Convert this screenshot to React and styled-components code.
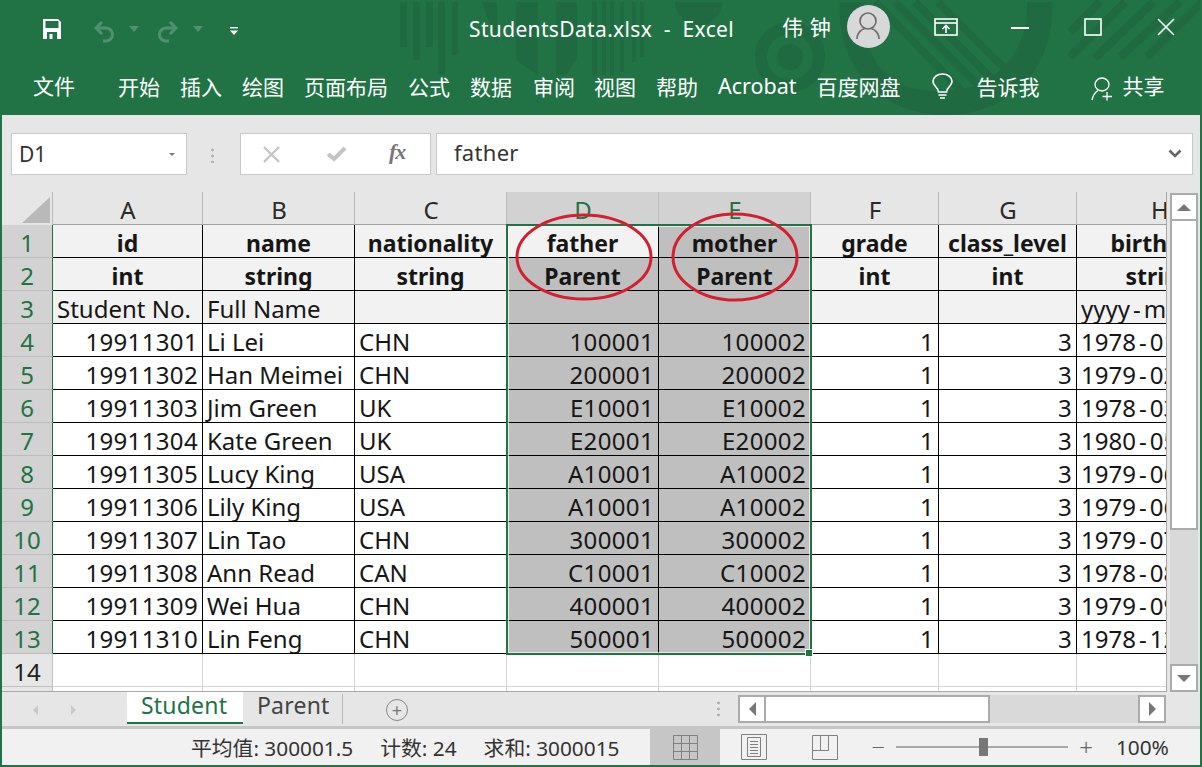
import React from 'react';
import styled, { createGlobalStyle } from 'styled-components';

const Global = createGlobalStyle`
  html, body { margin: 0; padding: 0; background: #e6e6e6; }
  body { font-family: "Noto Sans", "Noto Sans CJK SC", sans-serif; }
`;

const GREEN = '#217346';
const UI_FONT = '"Noto Sans", "Noto Sans CJK SC", sans-serif';

const Window = styled.div`
  width: 1202px; height: 767px; box-sizing: border-box; overflow: hidden;
  display: flex; flex-direction: column;
  border-left: 2px solid ${GREEN}; border-right: 2px solid ${GREEN}; border-bottom: 2px solid ${GREEN};
  background: #e6e6e6; font-family: ${UI_FONT};
`;

const Header = styled.header`
  position: relative; height: 115px; flex: none; background: ${GREEN}; color: #fff; overflow: hidden;
`;
const Decor = styled.svg`position: absolute; left: -2px; top: 0; pointer-events: none;`;

const TitleBar = styled.div`
  position: relative; height: 58px; display: flex; align-items: center; padding-left: 40px;
`;
const Slot = styled.span`
  display: flex; align-items: center; justify-content: center; flex: none; position: relative;
  top: ${p => p.$top || 0}px;
  width: ${p => p.$w}px; margin-left: ${p => p.$ml || 0}px;
`;
const Title = styled.span`
  flex: none; margin-left: ${p => p.$ml}px; font-size: 21px; white-space: pre; letter-spacing: .35px;
`;
const UserName = styled.span`
  flex: none; margin-left: ${p => p.$ml}px; font-size: 21px; letter-spacing: 1px; white-space: pre; position: relative; top: -3px;
  font-family: "Noto Sans CJK SC", sans-serif;
`;
const Avatar = styled.span`
  flex: none; width: 43px; height: 43px; border-radius: 50%; background: #d8d8d8; margin-left: ${p => p.$ml}px;
  display: flex; align-items: center; justify-content: center; position: relative; top: -3px;
`;

const Ribbon = styled.nav`
  position: relative; height: 57px; display: flex; align-items: flex-start; padding: 12px 0 0 31px;
`;
const Tab = styled.span`
  flex: none; font-size: ${p => (p.$latin ? 21.5 : 21)}px; line-height: 32px; margin-left: ${p => p.$ml}px; white-space: nowrap;
  font-family: ${p => (p.$latin ? UI_FONT : '"Noto Sans CJK SC", sans-serif')};
  position: relative; top: ${p => p.$top || 0}px;
  font-weight: 400;
`;
const RibbonIcon = styled.span`
  flex: none; margin-left: ${p => p.$ml}px; display: flex; position: relative; top: ${p => p.$top || 0}px;
`;

const FormulaRow = styled.div`
  flex: none; height: 77px; box-sizing: border-box; padding: 18px 7px 0 9px; display: flex; align-items: flex-start;
`;
const NameBox = styled.div`
  width: 176px; height: 42px; box-sizing: border-box; background: #fff; border: 1px solid #c9c9c9;
  display: flex; align-items: center; justify-content: space-between; padding: 0 11px 0 7px;
  font-size: 21px; color: #333;
`;
const DropTri = styled.span`
  width: 0; height: 0; border-left: 3.5px solid transparent; border-right: 3.5px solid transparent; border-top: 3.5px solid #777;
`;
const Grip = styled.div`
  width: 3px; height: 16px; margin: 14px 26px 0 24px; flex: none;
  background: radial-gradient(circle, #b5b5b5 1.4px, transparent 1.6px) 0 0 / 3px 6px;
`;
const FxBox = styled.div`
  width: 191px; height: 42px; box-sizing: border-box; background: #fff; border: 1px solid #c9c9c9;
  display: flex; align-items: center; padding-left: 21px; flex: none;
`;
const FxIcon = styled.span`
  display: flex; width: ${p => p.$w}px; margin-left: ${p => p.$ml || 0}px; justify-content: center;
`;
const FxLabel = styled.span`
  font: italic 700 22px "Liberation Serif", serif; color: #777; margin-left: 42px; letter-spacing: -1px; position: relative; top: -2px;
`;
const FormulaInput = styled.div`
  flex: 1; margin-left: 5px; height: 42px; box-sizing: border-box; background: #fff; border: 1px solid #c9c9c9;
  display: flex; align-items: center; justify-content: space-between; padding: 0 10px 4px 17px;
  font-size: 22px; color: #333; letter-spacing: .3px;
`;
const FormulaChevron = styled.span`display: flex; position: relative; top: 2px;`;

const SheetRow = styled.div`flex: none; height: 500px; display: flex; overflow: hidden;`;
const SheetPane = styled.div`
  position: relative; width: 1165px; box-sizing: border-box; overflow: hidden; flex: none; background: #fff;
  border-right: 1px solid #a8a8a8; border-bottom: 1px solid #a8a8a8;
`;
const Grid = styled.div`
  display: grid; width: max-content;
  grid-template-columns: 51px 150px 152px 152px 152px 152px 128px 138px 166px;
  grid-auto-rows: 33px;
`;
const Corner = styled.div`
  background: #e6e6e6; border-right: 1px solid #b9b9b9; box-sizing: border-box; display: flex;
  align-items: flex-end; justify-content: flex-end; padding: 0 2px 2px 0;
`;
const ColHead = styled.div`
  box-sizing: border-box; background: ${p => (p.$sel ? '#d2d2d2' : '#e6e6e6')};
  color: ${p => (p.$sel ? GREEN : '#2a2a2a')};
  border-right: 1px solid ${p => (p.$sel ? '#bcbcbc' : '#b9b9b9')}; border-bottom: 1px solid #9f9f9f;
  text-align: center; font-size: 24px; line-height: 36px; white-space: nowrap; padding-left: 1px;
`;
const RowHead = styled.div`
  box-sizing: border-box; background: ${p => (p.$sel ? '#d2d2d2' : '#e6e6e6')};
  color: ${p => (p.$sel ? GREEN : '#222')};
  border-right: 1px solid ${p => (p.$sel ? GREEN : '#c0c0c0')}; border-bottom: 1px solid ${p => (p.$sel ? '#bcbcbc' : '#c0c0c0')};
  text-align: center; font-size: 24px; line-height: 35px; overflow: hidden;
`;
const cellBg = p => (p.$active ? '#f2f2f2' : p.$sel ? '#bfbfbf' : p.$band ? '#f2f2f2' : '#fff');
const Cell = styled.div`
  box-sizing: border-box; background: ${cellBg};
  border-right: 1px solid ${p => (p.$blank ? '#d4d4d4' : '#000')};
  border-bottom: 1px solid ${p => (p.$blank ? '#d4d4d4' : '#000')};
  font-size: ${p => (p.$bold ? 23 : 24)}px; line-height: ${p => (p.$bold ? 37 : 35)}px; color: #161616; overflow: hidden; white-space: nowrap;
  font-weight: ${p => (p.$bold ? 700 : 400)};
  text-align: ${p => p.$align || 'left'};
  letter-spacing: ${p => (p.$align === 'right' ? '.35px' : '0')};
  padding: 0 ${p => (p.$align === 'right' ? 4 : 0)}px 0 ${p => (p.$align === 'left' || !p.$align ? 4 : 0)}px;
`;
const Hyphen = styled.span`margin: 0 3px;`;
const Selection = styled.div`
  position: absolute; left: 504px; top: 32px; width: 306px; height: 431px; box-sizing: border-box;
  border: 2px solid ${GREEN}; pointer-events: none; box-shadow: inset 0 0 0 1px rgba(255,255,255,.65);
`;
const FillHandle = styled.span`
  position: absolute; right: -3px; bottom: -4px; width: 8px; height: 8px; box-sizing: border-box; background: ${GREEN}; border: 1px solid #fff;
`;
const Marks = styled.svg`position: absolute; left: 0; top: 0; pointer-events: none;`;

const VScroll = styled.div`
  flex: none; width: 28px; margin: 1px 0 0 3px; display: flex; flex-direction: column;
`;
const VButton = styled.div`
  width: 28px; height: 28px; box-sizing: border-box; background: #fff; border: 2px solid #ababab; flex: none;
  display: flex; align-items: center; justify-content: center;
`;
const VThumb = styled.div`
  width: 28px; height: 309px; box-sizing: border-box; background: #fff; border: 2px solid #ababab; border-top: 0; flex: none;
`;
const VTrack = styled.div`flex: 1; width: 28px; background: #d9d9d9;`;
const Tri = styled.span`
  width: 0; height: 0;
  ${p => p.$d === 'up' && `border-left:7px solid transparent;border-right:7px solid transparent;border-bottom:7px solid #777;`}
  ${p => p.$d === 'down' && `border-left:7px solid transparent;border-right:7px solid transparent;border-top:7px solid #777;`}
  ${p => p.$d === 'left' && `border-top:7px solid transparent;border-bottom:7px solid transparent;border-right:7px solid #777;`}
  ${p => p.$d === 'right' && `border-top:7px solid transparent;border-bottom:7px solid transparent;border-left:7px solid #777;`}
`;

const TabBar = styled.div`
  flex: none; height: 37px; box-sizing: border-box; display: flex; align-items: flex-start;
  background: #e6e6e6; border-bottom: 3px solid #c6c6c6; position: relative;
`;
const NavArrow = styled.span`
  flex: none; margin-left: ${p => p.$ml}px; margin-top: 13px; width: 0; height: 0;
  border-top: 5px solid transparent; border-bottom: 5px solid transparent;
  ${p => (p.$left ? 'border-right: 5px solid #c9c9c9;' : 'border-left: 5px solid #c9c9c9;')}
`;
const SheetTab = styled.div`
  flex: none; box-sizing: border-box; height: 32px; padding: 0 14px;
  font-size: 23px; line-height: 26px; letter-spacing: .2px;
  background: ${p => (p.$on ? '#fff' : 'transparent')};
  color: ${p => (p.$on ? GREEN : '#444')};
  font-weight: 400;
  margin-left: ${p => p.$ml || 0}px;
  width: ${p => p.$w}px;
  border-bottom: ${p => (p.$on ? `2px solid ${GREEN}` : '0')};
`;
const TabSep = styled.span`flex: none; width: 1px; height: 30px; margin-top: 2px; background: #b5b5b5;`;
const AddSheet = styled.span`
  flex: none; margin: 7px 0 0 43px; width: 22px; height: 22px; box-sizing: border-box; border: 1.5px solid #888; border-radius: 50%;
  display: flex; align-items: center; justify-content: center; color: #777; font-size: 18px; line-height: 1;
`;
const Grip2 = styled(Grip)`margin: 8px 0 0 309px; height: 18px;`;
const HScroll = styled.div`
  flex: none; margin: 3px 0 0 18px; width: 428px; height: 28px; display: flex; position: relative; background: #d9d9d9;
`;
const HButton = styled.div`
  flex: none; width: 28px; height: 28px; box-sizing: border-box; background: #fff; border: 2px solid #ababab;
  display: flex; align-items: center; justify-content: center;
`;
const HThumb = styled.div`
  flex: none; width: 224px; height: 28px; box-sizing: border-box; background: #fff; border: 2px solid #ababab; border-left: 0;
`;
const HTrack = styled.div`flex: 1;`;

const StatusBar = styled.footer`
  flex: 1; display: flex; align-items: stretch; background: #f1f1f1; color: #333; font-size: 20.8px; min-height: 0;
`;
const Stat = styled.span`
  flex: none; margin-left: ${p => p.$ml}px; align-self: center; white-space: nowrap;
  font-family: "Noto Sans", "Noto Sans CJK SC", sans-serif;
`;
const ViewBtn = styled.span`
  flex: none; display: flex; align-items: center; justify-content: center; width: ${p => p.$w}px;
  margin-left: ${p => p.$ml || 0}px; background: ${p => (p.$on ? '#c6c6c6' : 'transparent')};
`;
const ZoomSign = styled.span`
  flex: none; margin-left: ${p => p.$ml}px; align-self: center; color: #666; font-size: 24px; line-height: 1; font-weight: 300;
`;
const Slider = styled.span`
  flex: none; margin-left: ${p => p.$ml}px; width: 172px; height: 2px; background: #a8a8a8; align-self: center; position: relative;
`;
const SliderThumb = styled.span`
  position: absolute; left: 83px; top: -8px; width: 9px; height: 18px; background: #777;
`;

const cols = [
  { k: 'A', a: 'right', t: ['id', 'int', 'Student No.'] },
  { k: 'B', t: ['name', 'string', 'Full Name'] },
  { k: 'C', t: ['nationality', 'string', ''] },
  { k: 'D', a: 'right', sel: true, t: ['father', 'Parent', ''] },
  { k: 'E', a: 'right', sel: true, t: ['mother', 'Parent', ''] },
  { k: 'F', a: 'right', t: ['grade', 'int', ''] },
  { k: 'G', a: 'right', t: ['class_level', 'int', ''] },
  { k: 'H', date: true, t: ['birthday', 'string', 'yyyy-mm-dd'] },
];
const rows = [
  ['19911301', 'Li Lei', 'CHN', '100001', '100002', '1', '3', '1978-01-01'],
  ['19911302', 'Han Meimei', 'CHN', '200001', '200002', '1', '3', '1979-02-01'],
  ['19911303', 'Jim Green', 'UK', 'E10001', 'E10002', '1', '3', '1978-03-01'],
  ['19911304', 'Kate Green', 'UK', 'E20001', 'E20002', '1', '3', '1980-05-01'],
  ['19911305', 'Lucy King', 'USA', 'A10001', 'A10002', '1', '3', '1979-06-01'],
  ['19911306', 'Lily King', 'USA', 'A10001', 'A10002', '1', '3', '1979-06-01'],
  ['19911307', 'Lin Tao', 'CHN', '300001', '300002', '1', '3', '1979-07-01'],
  ['19911308', 'Ann Read', 'CAN', 'C10001', 'C10002', '1', '3', '1978-08-01'],
  ['19911309', 'Wei Hua', 'CHN', '400001', '400002', '1', '3', '1979-09-01'],
  ['19911310', 'Lin Feng', 'CHN', '500001', '500002', '1', '3', '1978-12-01'],
];
const ribbonTabs = [
  ['开始', 43], ['插入', 20], ['绘图', 20], ['页面布局', 20], ['公式', 20], ['数据', 20], ['审阅', 21], ['视图', 19], ['帮助', 20],
];

const DateText = ({ value }) => {
  const parts = value.split('-');
  return parts.map((p, i) => (
    <React.Fragment key={i}>{i > 0 && <Hyphen>-</Hyphen>}{p}</React.Fragment>
  ));
};

const DecorArt = () => (
  <Decor width="1202" height="115" viewBox="0 0 1202 115" fill="#1f6a41" aria-hidden="true">
    <defs><clipPath id="dial"><circle cx="945" cy="10" r="105" /></clipPath></defs>
    <rect x="400" y="2" width="7" height="45" /><rect x="413" y="2" width="7" height="58" />
    <rect x="426" y="2" width="7" height="45" /><rect x="438" y="2" width="7" height="73" />
    <rect x="452" y="2" width="6" height="53" />
    <polygon points="482,2 497,2 497,44" /><polygon points="516,2 538,2 538,75 516,60" />
    <polygon points="556,2 577,2 577,58 566,75 556,75" />
    <rect x="592" y="2" width="5" height="73" /><rect x="602" y="2" width="4" height="73" />
    <rect x="610" y="2" width="4" height="73" /><rect x="620" y="2" width="4" height="70" />
    <rect x="632" y="2" width="4" height="60" /><rect x="640" y="2" width="4" height="55" />
    <path d="M675 2h47a23.500 23.500 0 0 1-47 0z" />
    <path d="M790 22a35 35 0 1 0 .01 0zm0 12a23 23 0 1 1-.01 0z" fillRule="evenodd" />
    <circle cx="790" cy="57" r="13" />
    <path d="M840 2h25c-8 60 30 95 80 88 50 2 85-40 82-88h25c3 70-45 113-107 113-65 0-110-50-105-113z" />
    <g clipPath="url(#dial)" stroke="#1f6a41" strokeWidth="8" fill="none">
      <path d="M875 2l110 113M895 2l105 105M915 2l85 85M938 2l65 65" />
    </g>
    <g stroke="#1f6a41" strokeWidth="8" fill="none">
      <path d="M1070 32l30-30M1070 57l55-55M1095 58l58-56M1120 57l60-55M1147 57l55-55" />
    </g>
  </Decor>
);

const SaveIcon = () => (
  <svg width="20" height="22" viewBox="0 0 20 22"><path d="M1 1h15l3 3v17H1z" fill="#fff" /><rect x="3.500" y="3" width="13" height="7" fill={GREEN} /><rect x="5" y="14" width="10" height="7" fill={GREEN} /><rect x="7.500" y="16" width="3" height="5" fill="#fff" /></svg>
);
const UndoIcon = ({ flip }) => (
  <svg width="22" height="24" viewBox="0 0 22 24" fill="none" stroke="#4f9170" strokeWidth="3" style={flip ? { transform: 'scaleX(-1)' } : undefined}>
    <path d="M9 3L3 9l6 6" /><path d="M3 9h10a6.500 6.500 0 0 1 0 13H10" />
  </svg>
);
const SmallDown = ({ color = '#4f9170' }) => (
  <svg width="10" height="6" viewBox="0 0 10 6"><path d="M0 0h10L5 6z" fill={color} /></svg>
);
const CustomizeIcon = () => (
  <svg width="8" height="9" viewBox="0 0 8 9"><rect y="0" width="8" height="1.400" fill="#fff" /><path d="M0 3.400h8L4 8z" fill="#fff" /></svg>
);
const PersonIcon = () => (
  <svg width="26" height="28" viewBox="0 0 26 28" fill="none" stroke="#6e6e6e" strokeWidth="1.700">
    <circle cx="13" cy="9" r="8" /><path d="M2 27c0-6 4-9.500 7.500-10.500M24 27c0-6-4-9.500-7.500-10.500" />
  </svg>
);
const RibbonDisplayIcon = () => (
  <svg width="24" height="18" viewBox="0 0 24 18" fill="none" stroke="#fff" strokeWidth="1.600">
    <rect x="1" y="1" width="22" height="16" /><path d="M1 5h22" /><path d="M12 15V8M8.500 11L12 7.500l3.500 3.500" />
  </svg>
);
const Minimize = () => <svg width="18" height="2"><rect width="18" height="2" fill="#fff" /></svg>;
const Maximize = () => <svg width="18" height="18" fill="none" stroke="#fff" strokeWidth="1.600"><rect x="1" y="1" width="16" height="16" /></svg>;
const CloseX = ({ color = '#fff', s = 18, w = 1.600 }) => (
  <svg width={s} height={s} viewBox="0 0 18 18" fill="none" stroke={color} strokeWidth={w}><path d="M1 1l16 16M17 1L1 17" /></svg>
);
const Bulb = () => (
  <svg width="21" height="26" viewBox="0 0 21 26" fill="none" stroke="#fff" strokeWidth="1.700">
    <path d="M6.500 19c0-4.500-5.500-6-5.500-10.500a9.500 7.500 0 0 1 19 0c0 4.500-5.500 6-5.500 10.500z" /><path d="M6.500 22h8M8 25h5" />
  </svg>
);
const ShareIcon = () => (
  <svg width="23" height="24" viewBox="0 0 23 24" fill="none" stroke="#fff" strokeWidth="1.300">
    <ellipse cx="11" cy="7.500" rx="7" ry="6.500" /><path d="M1 23c1-5 3-7.500 6-9.500" /><path d="M16 15v8.500M11.500 19.500h9.500" />
  </svg>
);
const Check = () => (
  <svg width="21" height="16" viewBox="0 0 21 16" fill="none" stroke="#c4c4c4" strokeWidth="4"><path d="M2 8l6 5L19 2" /></svg>
);
const Chevron = () => (
  <svg width="14" height="10" viewBox="0 0 14 10" fill="none" stroke="#666" strokeWidth="2.600"><path d="M1.500 1.500L7 7l5.500-5.500" /></svg>
);
const NormalView = () => (
  <svg width="25" height="25" viewBox="0 0 25 25" fill="none" stroke="#808080" strokeWidth="1"><path d="M.5.500h24v24H.5zM8.500.500v24M16.500.500v24M.5 8.500h24M.5 16.500h24" /></svg>
);
const PageView = () => (
  <svg width="26" height="26" viewBox="0 0 26 26" fill="none" stroke="#808080" strokeWidth="1"><path d="M.5.500h25v25H.5zM6.500 3.500h13v19h-13zM9 7.500h8M9 10.500h8M9 13.500h8M9 16.500h8M9 19.500h8" /></svg>
);
const BreakView = () => (
  <svg width="26" height="25" viewBox="0 0 26 25" fill="none" stroke="#808080" strokeWidth="1"><path d="M.5.500h25v24H.5zM.5 15.500h16M16.500.500v15M8.500.500v15" /></svg>
);

export default function App() {
  return (
    <Window>
      <Global />
      <Header>
        <DecorArt />
        <TitleBar>
          <Slot $w={20}><SaveIcon /></Slot>
          <Slot $w={22} $ml={31} $top={2}><UndoIcon /></Slot>
          <Slot $w={10} $ml={14}><SmallDown /></Slot>
          <Slot $w={22} $ml={18} $top={2}><UndoIcon flip /></Slot>
          <Slot $w={10} $ml={14}><SmallDown /></Slot>
          <Slot $w={8} $ml={27} $top={2}><CustomizeIcon /></Slot>
          <Title $ml={231}>StudentsData.xlsx  -  Excel</Title>
          <UserName $ml={48}>伟 钟</UserName>
          <Avatar $ml={15}><PersonIcon /></Avatar>
          <Slot $w={24} $ml={44} $top={-2}><RibbonDisplayIcon /></Slot>
          <Slot $w={18} $ml={53} $top={-1}><Minimize /></Slot>
          <Slot $w={18} $ml={55} $top={-2}><Maximize /></Slot>
          <Slot $w={18} $ml={55} $top={-2}><CloseX /></Slot>
        </TitleBar>
        <Ribbon>
          <Tab $ml={0} $top={-1}>文件</Tab>
          {ribbonTabs.map(([t, ml]) => <Tab key={t} $ml={ml}>{t}</Tab>)}
          <Tab $ml={20} $latin>Acrobat</Tab>
          <Tab $ml={20}>百度网盘</Tab>
          <RibbonIcon $ml={31} $top={3}><Bulb /></RibbonIcon>
          <Tab $ml={24}>告诉我</Tab>
          <RibbonIcon $ml={51} $top={7}><ShareIcon /></RibbonIcon>
          <Tab $ml={9} $top={-1}>共享</Tab>
        </Ribbon>
      </Header>

      <FormulaRow>
        <NameBox>D1<DropTri /></NameBox>
        <Grip />
        <FxBox>
          <FxIcon $w={18}><CloseX color="#c4c4c4" s={17} w={2.400} /></FxIcon>
          <FxIcon $w={21} $ml={46}><Check /></FxIcon>
          <FxLabel>fx</FxLabel>
        </FxBox>
        <FormulaInput>father<FormulaChevron><Chevron /></FormulaChevron></FormulaInput>
      </FormulaRow>

      <SheetRow>
        <SheetPane>
          <Grid>
            <Corner>
              <svg width="28" height="26" viewBox="0 0 28 26"><path d="M28 0v26H0z" fill="#b9b9b9" /></svg>
            </Corner>
            {cols.map(c => <ColHead key={c.k} $sel={c.sel}>{c.k}</ColHead>)}
            {[0, 1, 2].map(r => (
              <React.Fragment key={r}>
                <RowHead $sel>{r + 1}</RowHead>
                {cols.map(c => (
                  <Cell
                    key={c.k}
                    $band
                    $sel={c.sel}
                    $active={r === 0 && c.k === 'D'}
                    $bold={r < 2}
                    $align={r < 2 ? 'center' : 'left'}
                  >
                    {c.date && r === 2 ? <DateText value={c.t[r]} /> : c.t[r]}
                  </Cell>
                ))}
              </React.Fragment>
            ))}
            {rows.map((row, r) => (
              <React.Fragment key={r}>
                <RowHead $sel>{r + 4}</RowHead>
                {row.map((v, i) => (
                  <Cell key={i} $sel={cols[i].sel} $align={cols[i].a}>
                    {cols[i].date ? <DateText value={v} /> : v}
                  </Cell>
                ))}
              </React.Fragment>
            ))}
            <RowHead>14</RowHead>
            {cols.map(c => <Cell key={c.k} $blank />)}
            <RowHead />
            {cols.map(c => <Cell key={c.k} $blank />)}
          </Grid>
          <Selection><FillHandle /></Selection>
          <Marks width="1165" height="500" viewBox="0 0 1165 500" fill="none" stroke="#d3202e" strokeWidth="3">
            <ellipse cx="582" cy="65" rx="67" ry="42" />
            <ellipse cx="733" cy="65" rx="62" ry="43" />
          </Marks>
        </SheetPane>
        <VScroll>
          <VButton><Tri $d="up" /></VButton>
          <VThumb />
          <VTrack />
          <VButton><Tri $d="down" /></VButton>
        </VScroll>
      </SheetRow>

      <TabBar>
        <NavArrow $left $ml={31} />
        <NavArrow $ml={33} />
        <SheetTab $on $ml={51} $w={116}>Student</SheetTab>
        <SheetTab $w={99}>Parent</SheetTab>
        <TabSep />
        <AddSheet>+</AddSheet>
        <Grip2 />
        <HScroll>
          <HButton><Tri $d="left" /></HButton>
          <HThumb />
          <HTrack />
          <HButton><Tri $d="right" /></HButton>
        </HScroll>
      </TabBar>

      <StatusBar>
        <Stat $ml={189}>平均值: 300001.5</Stat>
        <Stat $ml={27}>计数: 24</Stat>
        <Stat $ml={27}>求和: 3000015</Stat>
        <ViewBtn $on $w={70} $ml={31}><NormalView /></ViewBtn>
        <ViewBtn $w={26} $ml={21}><PageView /></ViewBtn>
        <ViewBtn $w={26} $ml={45}><BreakView /></ViewBtn>
        <ZoomSign $ml={33}>−</ZoomSign>
        <Slider $ml={11}><SliderThumb /></Slider>
        <ZoomSign $ml={11}>+</ZoomSign>
        <Stat $ml={23}>100%</Stat>
      </StatusBar>
    </Window>
  );
}
